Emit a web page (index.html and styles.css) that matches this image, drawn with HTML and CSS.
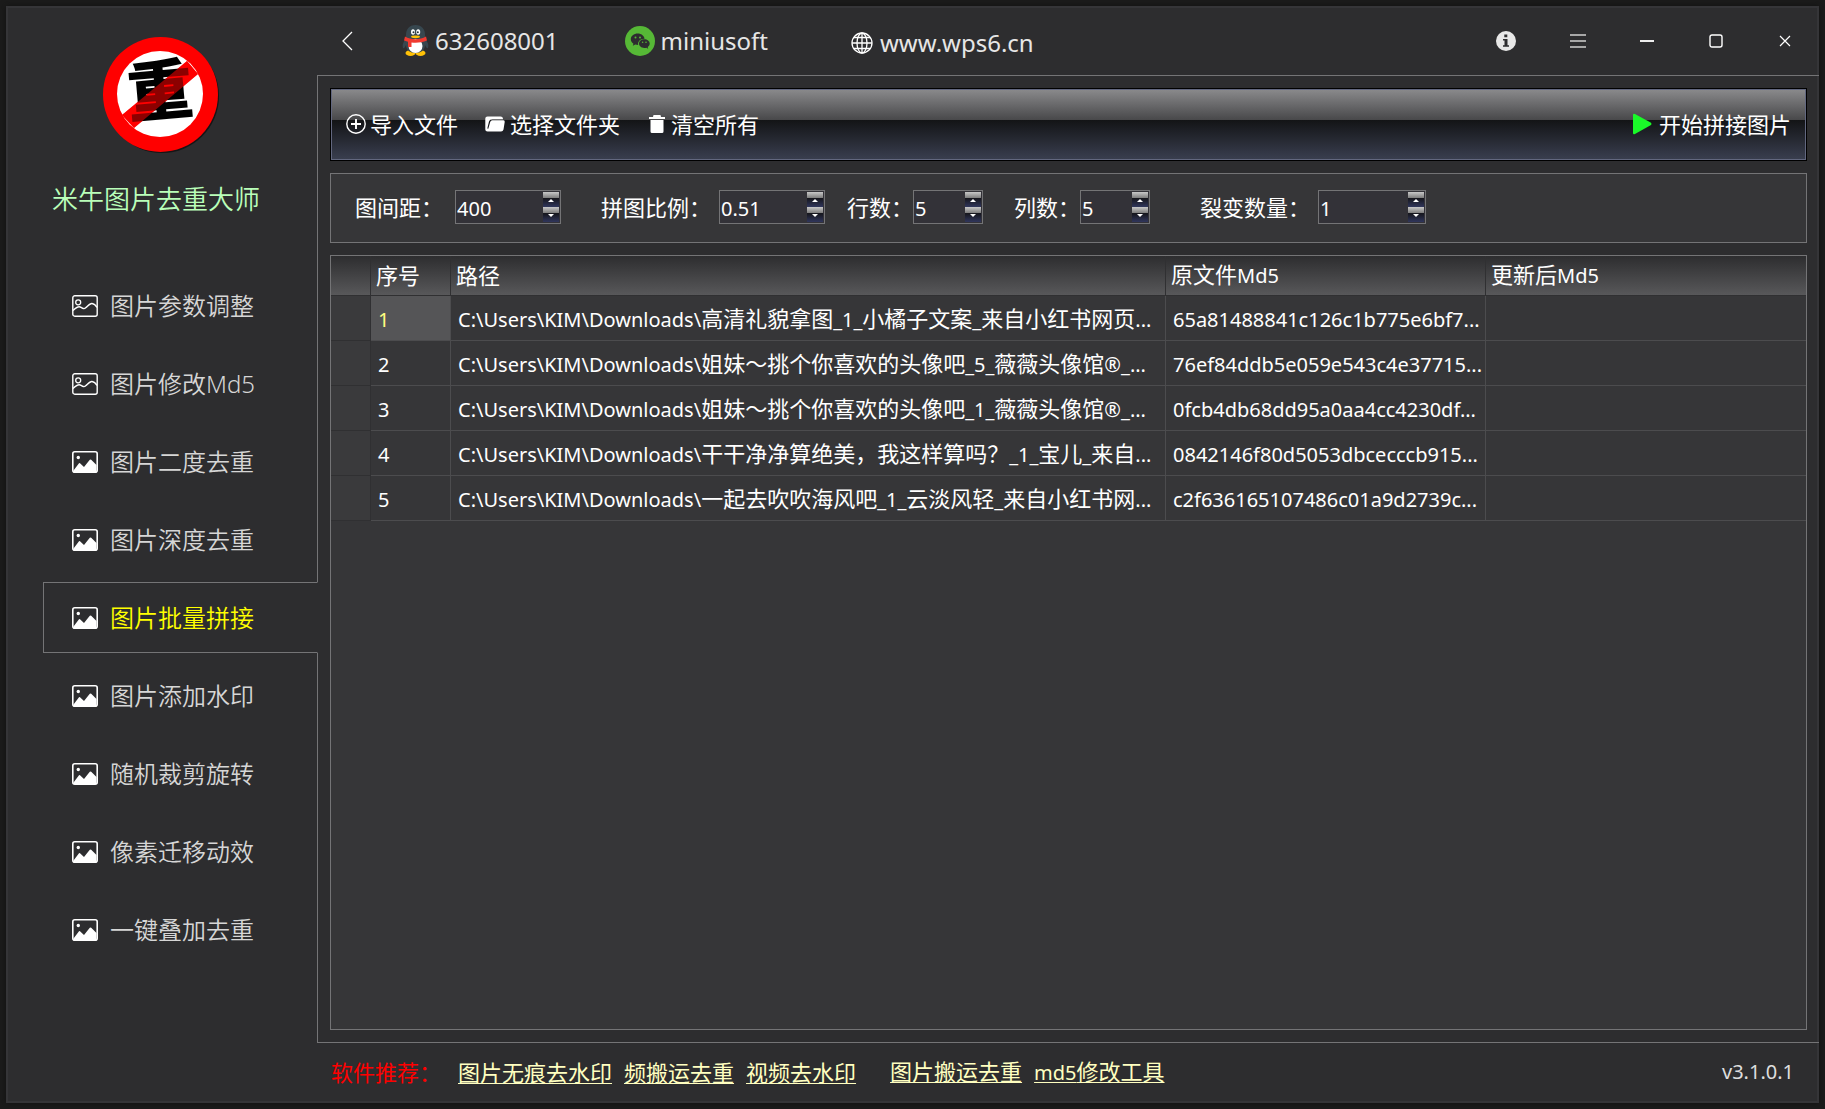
FILE: index.html
```html
<!DOCTYPE html>
<html lang="zh-CN">
<head>
<meta charset="utf-8">
<title>米牛图片去重大师</title>
<link rel="stylesheet" href="styles.css">
</head>
<body>
<svg class="sprite" aria-hidden="true">
  <symbol id="pic-outline" viewBox="0 0 26 22">
    <rect x="0.8" y="0.8" width="24.4" height="20.4" rx="2" fill="none" stroke="#fff" stroke-width="1.4"/>
    <circle cx="6.2" cy="7.3" r="2.5" fill="none" stroke="#fff" stroke-width="1.3"/>
    <path d="M1 15.5C4 12.5 7 11 9 12.3S12 14.3 14 12.5S18 8.300 20 8.500S23.500 10 25 12.500" fill="none" stroke="#fff" stroke-width="1.400"/>
  </symbol>
  <symbol id="pic-solid" viewBox="0 0 26 22">
    <rect x="0.8" y="0.8" width="24.4" height="20.4" rx="2" fill="none" stroke="#fff" stroke-width="1.6"/>
    <circle cx="6.3" cy="6.5" r="1.700" fill="#fff"/>
    <path d="M1.500 21V19.500L7 12.200Q7.500 11.800 8 12.200L12 16L17.800 8.800Q18.500 8.200 19.200 8.800L24.500 14V21Z" fill="#fff"/>
  </symbol>
</svg>
<div class="window">
  <aside class="sidebar">
    <svg class="logo" viewBox="0 0 116 116" role="img" aria-label="重">
      <circle cx="59" cy="59" r="57" fill="#151516"/>
      <circle cx="57.500" cy="57.500" r="57.500" fill="#f00"/>
      <circle cx="57" cy="57" r="43" fill="#fff"/>
      <path d="M84 24L95 37L31 91L19 78Z" fill="#f00"/>
      <text class="logo-char" x="57" y="78" text-anchor="middle" transform="rotate(-5 57 54)">重</text>
      <path d="M84 24L95 37L31 91L19 78Z" fill="#f00" fill-opacity="0.55"/>
    </svg>
    <h1 class="app-name">米牛图片去重大师</h1>
    <nav class="nav">
      <a class="nav-item" href="#"><svg class="nav-icon"><use href="#pic-outline"/></svg>图片参数调整</a>
      <a class="nav-item" href="#"><svg class="nav-icon"><use href="#pic-outline"/></svg>图片修改Md5</a>
      <a class="nav-item" href="#"><svg class="nav-icon"><use href="#pic-solid"/></svg>图片二度去重</a>
      <a class="nav-item" href="#"><svg class="nav-icon"><use href="#pic-solid"/></svg>图片深度去重</a>
      <a class="nav-item nav-item-active" href="#" aria-current="page"><svg class="nav-icon"><use href="#pic-solid"/></svg>图片批量拼接</a>
      <a class="nav-item" href="#"><svg class="nav-icon"><use href="#pic-solid"/></svg>图片添加水印</a>
      <a class="nav-item" href="#"><svg class="nav-icon"><use href="#pic-solid"/></svg>随机裁剪旋转</a>
      <a class="nav-item" href="#"><svg class="nav-icon"><use href="#pic-solid"/></svg>像素迁移动效</a>
      <a class="nav-item" href="#"><svg class="nav-icon"><use href="#pic-solid"/></svg>一键叠加去重</a>
    </nav>
  </aside>

  <div class="main">
    <header class="titlebar">
      <button class="back" type="button" aria-label="返回"><svg width="12" height="20" viewBox="0 0 12 20"><path d="M11 1L2 10L11 19" fill="none" stroke="#fff" stroke-width="1.300"/></svg></button>
      <a class="contact contact-qq" href="#">
        <svg width="27" height="31" viewBox="0 0 27 31">
          <path d="M4 14C1 17 0 20 1 23C2 24 3 22 4 20ZM23 14C26 17 27 20 26 23C25 24 24 22 23 20Z" fill="#37474f"/>
          <ellipse cx="8.500" cy="28" rx="5" ry="3" fill="#ffc107"/><ellipse cx="18.500" cy="28" rx="5" ry="3" fill="#ffc107"/>
          <path d="M13.500 0C7 0 4 4.500 4 10V20C4 25 8 28 13.500 28S23 25 23 20V10C23 4.500 20 0 13.500 0Z" fill="#37474f"/>
          <ellipse cx="13.500" cy="21" rx="7" ry="7" fill="#fff"/>
          <ellipse cx="11" cy="7" rx="2" ry="2.800" fill="#fff"/><ellipse cx="16.200" cy="7" rx="2" ry="2.800" fill="#fff"/>
          <circle cx="11.500" cy="7.300" r="1" fill="#263238"/><circle cx="15.800" cy="7.300" r="1" fill="#263238"/>
          <ellipse cx="13.500" cy="11.800" rx="4.500" ry="1.400" fill="#ffc107"/>
          <path d="M3 11.500C9 15 18 15 24 11.500L25 15.500C20 17.800 14 18 9.500 17.500V22H6V16.800L2 15.500Z" fill="#f03a30"/>
        </svg>
        632608001
      </a>
      <a class="contact contact-wechat" href="#">
        <svg width="30" height="30" viewBox="0 0 30 30">
          <circle cx="15" cy="15" r="15" fill="#56b836"/>
          <path d="M12.800 7.500C8.800 7.500 5.800 10 5.800 13.200C5.800 15 6.800 16.600 8.400 17.700L7.800 19.800L10.300 18.500C11.300 18.800 12.200 18.900 13.200 18.900C12.500 15.500 15.500 12.600 19.600 12.700C18.900 9.700 16.200 7.500 12.800 7.500Z" fill="#2d2d2f"/>
          <path d="M19.300 13.300C16.300 13.300 14 15.200 14 17.600S16.300 22 19.300 22C20 22 20.700 21.900 21.300 21.700L23.200 22.700L22.700 21C24 20.200 24.700 19 24.700 17.600C24.700 15.200 22.300 13.300 19.300 13.300Z" fill="#2d2d2f"/>
          <circle cx="10.500" cy="11.500" r="1" fill="#56b836"/><circle cx="15" cy="11.500" r="1" fill="#56b836"/><circle cx="17.600" cy="16.300" r="0.800" fill="#56b836"/><circle cx="21" cy="16.300" r="0.800" fill="#56b836"/>
        </svg>
        miniusoft
      </a>
      <a class="contact contact-site" href="#">
        <svg width="22" height="22" viewBox="0 0 22 22" fill="none" stroke="#fff" stroke-width="1.300"><circle cx="11" cy="11" r="10"/><ellipse cx="11" cy="11" rx="5" ry="10"/><path d="M11 1V21M1 11H21M3 5.500H19M3 16.500H19"/></svg>
        www.wps6.cn
      </a>
      <div class="window-buttons">
        <button class="winbtn winbtn-info" type="button" aria-label="关于"><svg width="20" height="20" viewBox="0 0 20 20"><circle cx="10" cy="10" r="10" fill="#e8e8e8"/><path d="M8.300 3.500H11.300V6.200H8.300ZM7 8H11.500V14.300H13V15.800H7V14.300H8.500V9.500H7Z" fill="#2d2d2f"/></svg></button>
        <button class="winbtn" type="button" aria-label="菜单"><svg width="16" height="14" viewBox="0 0 16 14"><path d="M0 1H16M0 7H16M0 13H16" stroke="#d0d0d0" stroke-width="1.400"/></svg></button>
        <button class="winbtn" type="button" aria-label="最小化"><svg width="14" height="14" viewBox="0 0 14 14"><path d="M0 7H14" stroke="#eee" stroke-width="2"/></svg></button>
        <button class="winbtn" type="button" aria-label="最大化"><svg width="14" height="14" viewBox="0 0 14 14"><rect x="1" y="1" width="12" height="12" rx="2" fill="none" stroke="#fff" stroke-width="1.400"/></svg></button>
        <button class="winbtn" type="button" aria-label="关闭"><svg width="12" height="12" viewBox="0 0 12 12"><path d="M1 1L11 11M11 1L1 11" stroke="#fff" stroke-width="1.200"/></svg></button>
      </div>
    </header>

    <main class="panel">
      <div class="toolbar">
        <button class="tool" type="button"><svg width="20" height="20" viewBox="0 0 20 20" fill="none" stroke="#fff"><circle cx="10" cy="10" r="9.200" stroke-width="1.400"/><path d="M10 5V15M5 10H15" stroke-width="1.900"/></svg>导入文件</button>
        <button class="tool tool-folder" type="button"><svg width="20" height="16" viewBox="0 0 20 16"><path d="M2.500 15.500Q0.300 15.500 0.300 13.500V2.500Q0.300 0.500 2.500 0.500H15.500Q18 0.500 18 3.200H7.500Q4.500 3.200 4 5.500L2.300 12.500L3.300 12.800L5.200 6Q5.600 4.300 7.300 4.300H18.500Q20 4.300 19.700 6L18.500 13.500Q18 15.500 16 15.500Z" fill="#fff"/></svg>选择文件夹</button>
        <button class="tool tool-trash" type="button"><svg width="16" height="18" viewBox="0 0 16 18"><path d="M0 2H4L4.500 0H11.500L12 2H16V4H0ZM1.500 5H14.500V16.500Q14.500 18 13 18H3Q1.500 18 1.500 16.500Z" fill="#fff"/></svg>清空所有</button>
        <button class="tool tool-start" type="button"><svg width="19" height="22" viewBox="0 0 19 22"><path d="M0 2Q0 0 2 1L18 9.800Q19 11 18 12L2 21Q0 22 0 20Z" fill="#1afa29"/></svg>开始拼接图片</button>
      </div>

      <form class="options">
        <div class="field field-gap"><label for="gap">图间距：</label><div class="spin"><input id="gap" type="text" value="400"><div class="steps"><button type="button" class="step step-up" aria-label="增加"></button><button type="button" class="step step-down" aria-label="减少"></button></div></div></div>
        <div class="field field-ratio"><label for="ratio">拼图比例：</label><div class="spin"><input id="ratio" type="text" value="0.51"><div class="steps"><button type="button" class="step step-up" aria-label="增加"></button><button type="button" class="step step-down" aria-label="减少"></button></div></div></div>
        <div class="field field-rows"><label for="rows">行数：</label><div class="spin spin-small"><input id="rows" type="text" value="5"><div class="steps"><button type="button" class="step step-up" aria-label="增加"></button><button type="button" class="step step-down" aria-label="减少"></button></div></div></div>
        <div class="field field-cols"><label for="cols">列数：</label><div class="spin spin-small"><input id="cols" type="text" value="5"><div class="steps"><button type="button" class="step step-up" aria-label="增加"></button><button type="button" class="step step-down" aria-label="减少"></button></div></div></div>
        <div class="field field-count"><label for="count">裂变数量：</label><div class="spin spin-wide"><input id="count" type="text" value="1"><div class="steps"><button type="button" class="step step-up" aria-label="增加"></button><button type="button" class="step step-down" aria-label="减少"></button></div></div></div>
      </form>

      <div class="grid">
        <table class="files">
          <colgroup><col class="col-mark"><col class="col-index"><col class="col-path"><col class="col-md5"><col class="col-md5"></colgroup>
          <thead>
            <tr><th></th><th>序号</th><th>路径</th><th>原文件<span class="latin">Md5</span></th><th>更新后<span class="latin">Md5</span></th></tr>
          </thead>
          <tbody>
            <tr><td></td><td class="selected"><span class="latin">1</span></td><td><span class="latin">C:\Users\KIM\Downloads\</span>高清礼貌拿图<span class="latin">_1_</span>小橘子文案<span class="latin">_</span>来自小红书网页<span class="latin">...</span></td><td><span class="latin">65a81488841c126c1b775e6bf7...</span></td><td></td></tr>
            <tr><td></td><td><span class="latin">2</span></td><td><span class="latin">C:\Users\KIM\Downloads\</span>姐妹～挑个你喜欢的头像吧<span class="latin">_5_</span>薇薇头像馆<span class="latin">®_...</span></td><td><span class="latin">76ef84ddb5e059e543c4e37715...</span></td><td></td></tr>
            <tr><td></td><td><span class="latin">3</span></td><td><span class="latin">C:\Users\KIM\Downloads\</span>姐妹～挑个你喜欢的头像吧<span class="latin">_1_</span>薇薇头像馆<span class="latin">®_...</span></td><td><span class="latin">0fcb4db68dd95a0aa4cc4230df...</span></td><td></td></tr>
            <tr><td></td><td><span class="latin">4</span></td><td><span class="latin">C:\Users\KIM\Downloads\</span>干干净净算绝美，我这样算吗？<span class="latin">_1_</span>宝儿<span class="latin">_</span>来自<span class="latin">...</span></td><td><span class="latin">0842146f80d5053dbcecccb915...</span></td><td></td></tr>
            <tr><td></td><td><span class="latin">5</span></td><td><span class="latin">C:\Users\KIM\Downloads\</span>一起去吹吹海风吧<span class="latin">_1_</span>云淡风轻<span class="latin">_</span>来自小红书网<span class="latin">...</span></td><td><span class="latin">c2f636165107486c01a9d2739c...</span></td><td></td></tr>
          </tbody>
        </table>
      </div>
    </main>

    <footer class="footer">
      <span class="promo">软件推荐：</span>
      <div class="links">
        <a href="#">图片无痕去水印</a>
        <a href="#">频搬运去重</a>
        <a href="#">视频去水印</a>
      </div>
      <div class="links">
        <a href="#">图片搬运去重</a>
        <a href="#"><span class="latin">md5</span>修改工具</a>
      </div>
      <span class="version">v3.1.0.1</span>
    </footer>
  </div>
</div>
</body>
</html>
```
FILE: styles.css
```css
* { box-sizing: border-box; }

body {
  margin: 0;
  padding: 6px;
  min-height: 100vh;
  display: flex;
  background: #1b1b1b;
  color: #fff;
  font: 22px/30px "Noto Sans", "Noto Sans CJK SC", sans-serif;
}

button, input { font: inherit; color: inherit; }
button { padding: 0; border: 0; background: none; display: flex; align-items: center; }
a { color: inherit; text-decoration: none; }
svg { flex: none; display: block; }
.sprite { position: absolute; width: 0; height: 0; }
.latin { font-size: 20px; }

.window {
  flex: 1;
  display: flex;
  min-width: 0;
  background: #2d2d2f;
  box-shadow: 0 0 6px #111, inset 0 0 0 2px #353538;
}

/* Sidebar */
.sidebar {
  width: 311px;
  flex: none;
  display: flex;
  flex-direction: column;
  padding-top: 31px;
}
.logo { width: 116px; height: 116px; margin-left: 97px; overflow: visible; }
.logo-char { font: 900 66px "Noto Sans CJK SC", sans-serif; fill: #000; }
.app-name {
  margin: 27px 0 0 46px;
  font-size: 26px;
  line-height: 38px;
  font-weight: 350;
  color: #b9ffb9;
}
.nav {
  display: flex;
  flex-direction: column;
  gap: 7px;
  margin: 52px 0 0 37px;
}
.nav-item {
  display: flex;
  align-items: center;
  gap: 12px;
  height: 71px;
  padding-left: 28px;
  border: 1px solid transparent;
  font-size: 24px;
  font-weight: 350;
  color: #d6d6d6;
}
.nav-item-active {
  position: relative;
  margin-right: -1px;
  background: #2d2d2f;
  border-color: #747476;
  border-right-color: #2d2d2f;
  color: #ff0;
}
.nav-icon { width: 26px; height: 22px; }

/* Title bar */
.main { flex: 1; min-width: 0; display: flex; flex-direction: column; }
.titlebar {
  display: flex;
  align-items: center;
  height: 69px;
  padding-left: 24px;
}
.contact {
  display: flex;
  align-items: center;
  font-size: 24px;
  color: #e6e6e6;
}
.contact-qq { gap: 6px; margin-left: 49px; }
.contact-wechat { gap: 6px; margin-left: 66px; }
.contact-site { gap: 7px; margin-left: 83px; padding-top: 4px; }
.window-buttons { display: flex; margin-left: auto; height: 100%; }
.winbtn { width: 69px; justify-content: center; }
.winbtn-info { width: 74px; }

/* Work panel */
.panel {
  flex: 1;
  display: flex;
  flex-direction: column;
  gap: 12px;
  padding: 12px;
  border: solid #747476;
  border-width: 1px 0 1px 1px;
}
.toolbar {
  display: flex;
  align-items: center;
  height: 73px;
  padding: 0 15px 2px;
  border: 1px solid #000;
  box-shadow: inset 0 0 0 1px #62677f;
  background: linear-gradient(#8b8b8d, #48484a 31px, #131416 31px, #3a3f50);
}
.tool { gap: 4px; }
.tool-folder { gap: 5px; margin-left: 27px; }
.tool-trash { gap: 6px; margin-left: 29px; }
.tool-start { gap: 7px; margin-left: auto; }

.options {
  display: flex;
  align-items: center;
  height: 70px;
  padding: 0 0 2px 24px;
  border: 1px solid #747476;
  background: #363638;
}
.field { display: flex; align-items: center; gap: 8px; }
.field-gap { gap: 12px; }
.field-ratio { margin-left: 40px; }
.field-rows { gap: 0; margin-left: 22px; }
.field-cols { gap: 0; margin-left: 31px; }
.field-count { margin-left: 50px; }
.spin {
  display: flex;
  width: 106px;
  height: 34px;
  padding: 1px;
  border: 1px solid #747476;
  background: #333238;
}
.spin-small { width: 70px; }
.spin-wide { width: 108px; }
.spin input {
  flex: 1;
  min-width: 0;
  padding: 3px 0 0;
  border: 0;
  background: none;
  font-size: 20px;
}
.steps { display: flex; flex-direction: column; width: 16px; }
.step {
  flex: 1;
  justify-content: center;
  padding-top: 1px;
  background: linear-gradient(#c8c8c8, #7c7c7c 6px, #15151a 6px, #30365c);
}
.step::before { content: ""; border: 3px solid transparent; }
.step-up::before { border-top: 0; border-bottom-color: #fff; }
.step-down::before { border-bottom: 0; border-top-color: #fff; }

.grid { flex: 1; border: 1px solid #747476; background: #363638; }
.files { width: 100%; table-layout: fixed; border-collapse: separate; border-spacing: 0; }
.col-mark { width: 40px; }
.col-index { width: 80px; }
.col-md5 { width: 320px; }
.files th {
  height: 40px;
  padding: 0 0 2px 5px;
  border: solid #303032;
  border-width: 0 1px 1px 0;
  background: linear-gradient(#2d2d2f, #58585a);
  font-weight: 400;
  text-align: left;
}
.files td {
  height: 45px;
  padding: 2px 0 0 7px;
  border: solid #4c4c4e;
  border-width: 0 1px 1px 0;
  overflow: hidden;
  white-space: nowrap;
}
.files td:first-child { background: #3a3a3c; border-color: #303032; }
.files th:last-child, .files td:last-child { border-right: 0; }
.files .selected { background: #555557; color: #ffff80; }

/* Footer */
.footer {
  display: flex;
  align-items: center;
  height: 60px;
  padding: 0 25px 2px 14px;
}
.promo { width: 127px; color: #f00; }
.links { display: flex; gap: 12px; margin-right: 34px; color: #ffffc0; }
.links a { text-decoration: underline 1px; text-underline-offset: 2px; }
.version { margin-left: auto; font-size: 20px; color: #dedede; }
```
